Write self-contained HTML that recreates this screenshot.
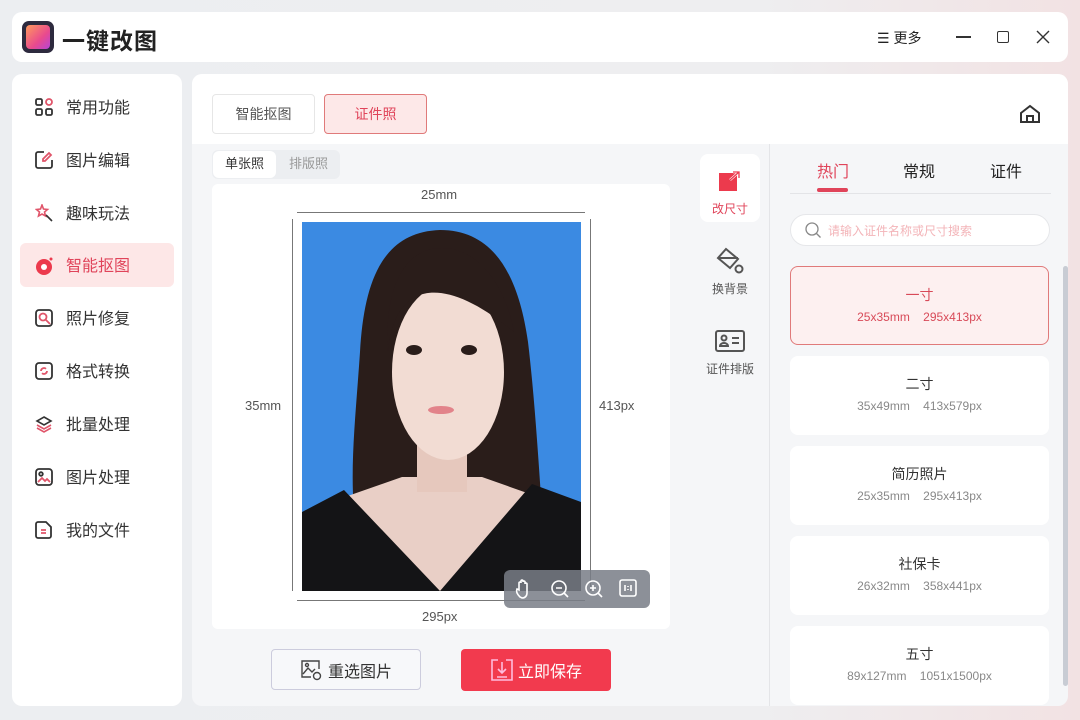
<!DOCTYPE html>
<html><head><meta charset="utf-8"><style>
*{margin:0;padding:0;box-sizing:border-box}
body{width:1080px;height:720px;overflow:hidden;font-family:"Liberation Sans","Noto Sans CJK SC",sans-serif;background:linear-gradient(90deg,#eceef1 0%,#eeeef0 70%,#f2e2e3 100%);position:relative;color:#333}
.abs{position:absolute}
.panel{position:absolute;background:#fff;border-radius:10px}
.nav{position:absolute;left:8px;width:154px;height:44px;border-radius:6px;font-size:16px;color:#333;display:flex;align-items:center}
.nav svg{position:absolute;left:15px;top:13px}
.nav span{position:absolute;left:46px;top:9px}
.card{position:absolute;left:790px;width:259px;height:79px;background:#fff;border-radius:8px;text-align:center}
.card .t{position:absolute;top:18px;width:100%;font-size:14px;color:#333}
.card .s{position:absolute;top:43px;width:100%;font-size:12px;color:#888;word-spacing:10px}
</style></head><body>
<!-- title bar -->
<div class="panel" style="left:12px;top:12px;width:1056px;height:50px"></div>
<div class="abs" style="left:22px;top:21px;width:32px;height:32px;border-radius:7px;background:#2d2a3e"></div>
<div class="abs" style="left:26px;top:25px;width:24px;height:24px;border-radius:4px;background:linear-gradient(135deg,#ff9a5c,#e94a8e 60%,#b545d6)"></div>
<div class="abs" style="left:62px;top:22px;font-size:23px;font-weight:bold;color:#222;letter-spacing:1px">一键改图</div>
<div class="abs" style="left:877px;top:28px;font-size:14px;color:#222">☰ 更多</div>
<div class="abs" style="left:956px;top:36px;width:15px;height:1.5px;background:#333"></div>
<div class="abs" style="left:997px;top:31px;width:12px;height:12px;border:1.5px solid #333;border-radius:2px"></div>
<svg class="abs" style="left:1036px;top:30px" width="14" height="14"><path d="M1 1L13 13M13 1L1 13" stroke="#333" stroke-width="1.4"/></svg>

<!-- sidebar -->
<div class="panel" style="left:12px;top:74px;width:170px;height:632px">
 <div class="nav" style="top:11px"><svg width="18" height="18" fill="none" stroke="#333" stroke-width="1.8"><rect x="1" y="1" width="6" height="6" rx="1.5"/><circle cx="14" cy="4" r="3" stroke="#e0556a"/><rect x="1" y="11" width="6" height="6" rx="1.5"/><rect x="11" y="11" width="6" height="6" rx="1.5"/></svg><span>常用功能</span></div>
 <div class="nav" style="top:64px"><svg width="18" height="18" fill="none" stroke="#333" stroke-width="1.8"><path d="M9 1H3a2 2 0 0 0-2 2v12a2 2 0 0 0 2 2h12a2 2 0 0 0 2-2V9"/><path d="M14 2l2 2-6 6H8V8z" stroke="#e0556a"/></svg><span>图片编辑</span></div>
 <div class="nav" style="top:117px"><svg width="18" height="18" fill="none" stroke="#e0556a" stroke-width="1.6"><path d="M7 1l1.5 4 4 .5-3 2.5 1 4-3.5-2-3.5 2 1-4-3-2.5 4-.5z"/><path d="M11 11l6 6" stroke="#333"/></svg><span>趣味玩法</span></div>
 <div class="nav" style="top:169px;background:#fde7e7;color:#e0445a"><svg width="20" height="20"><circle cx="9" cy="11" r="8" fill="#ec3a4d"/><circle cx="9" cy="11" r="3" fill="#fff"/><circle cx="16" cy="3" r="1.5" fill="#ec3a4d"/></svg><span>智能抠图</span></div>
 <div class="nav" style="top:222px"><svg width="18" height="18" fill="none" stroke="#333" stroke-width="1.8"><rect x="1" y="1" width="16" height="16" rx="3"/><circle cx="8" cy="8" r="3.5" stroke="#e0556a"/><path d="M10 10l5 5" stroke="#e0556a"/></svg><span>照片修复</span></div>
 <div class="nav" style="top:275px"><svg width="18" height="18" fill="none" stroke="#333" stroke-width="1.8"><rect x="1" y="1" width="16" height="16" rx="3"/><path d="M6 9a3 3 0 0 1 5-2.2M12 9a3 3 0 0 1-5 2.2" stroke="#e0556a"/></svg><span>格式转换</span></div>
 <div class="nav" style="top:328px"><svg width="18" height="18" fill="none" stroke="#333" stroke-width="1.6"><path d="M9 2l7 4-7 4-7-4z"/><path d="M2 10l7 4 7-4M2 13l7 4 7-4" stroke="#e0556a"/></svg><span>批量处理</span></div>
 <div class="nav" style="top:381px"><svg width="18" height="18" fill="none" stroke="#333" stroke-width="1.8"><rect x="1" y="1" width="16" height="16" rx="3"/><circle cx="6" cy="6" r="1.8"/><path d="M3 14l4-4 3 3 2-2 3 3" stroke="#e0556a"/></svg><span>图片处理</span></div>
 <div class="nav" style="top:434px"><svg width="18" height="18" fill="none" stroke="#333" stroke-width="1.8"><path d="M3 1h8l5 5v9a2 2 0 0 1-2 2H3a2 2 0 0 1-2-2V3a2 2 0 0 1 2-2z"/><path d="M6 9h5M6 12h5" stroke="#e0556a"/></svg><span>我的文件</span></div>
</div>

<!-- main -->
<div class="panel" style="left:192px;top:74px;width:876px;height:632px;background:#f5f6f8;overflow:hidden">
 <div class="abs" style="left:0;top:0;width:876px;height:70px;background:#fff"></div>
</div>
<div class="abs" style="left:212px;top:94px;width:103px;height:40px;border:1px solid #e6e6e6;border-radius:4px;font-size:14px;color:#555;text-align:center;line-height:38px;background:#fff">智能抠图</div>
<div class="abs" style="left:324px;top:94px;width:103px;height:40px;border:1px solid #e07a7a;border-radius:4px;font-size:14px;color:#e0445a;text-align:center;line-height:38px;background:#fde8e8">证件照</div>
<svg class="abs" style="left:1019px;top:104px" width="22" height="20" fill="none" stroke="#333" stroke-width="2"><path d="M2 9L11 2l9 7v9H2z"/><path d="M8 18v-6h6v6"/></svg>

<div class="abs" style="left:212px;top:150px;width:128px;height:29px;background:#eceef1;border-radius:6px"></div>
<div class="abs" style="left:213px;top:151px;width:63px;height:27px;background:#fff;border-radius:6px;font-size:13px;color:#333;text-align:center;line-height:25px">单张照</div>
<div class="abs" style="left:277px;top:151px;width:63px;height:27px;font-size:13px;color:#999;text-align:center;line-height:25px">排版照</div>

<div class="abs" style="left:212px;top:184px;width:458px;height:445px;background:#fff;border-radius:6px"></div>
<div class="abs" style="left:421px;top:187px;font-size:13px;color:#555">25mm</div>
<div class="abs" style="left:297px;top:212px;width:288px;height:1px;background:#777"></div>
<div class="abs" style="left:292px;top:219px;width:1px;height:372px;background:#777"></div>
<div class="abs" style="left:590px;top:219px;width:1px;height:372px;background:#777"></div>
<div class="abs" style="left:297px;top:600px;width:288px;height:1px;background:#777"></div>
<div class="abs" style="left:245px;top:398px;font-size:13px;color:#555">35mm</div>
<div class="abs" style="left:599px;top:398px;font-size:13px;color:#555">413px</div>
<div class="abs" style="left:422px;top:609px;font-size:13px;color:#555">295px</div>

<svg class="abs" style="left:302px;top:222px" width="279" height="369" viewBox="0 0 279 369">
 <rect width="279" height="369" fill="#3b8ae2"/>
 <path d="M138 8C80 10 62 60 58 130C54 190 48 240 52 290L240 290C236 230 232 170 226 120C216 50 190 8 138 8Z" fill="#2a1d1a"/>
 <path d="M100 255L0 290V369H279V290L180 255Z" fill="#e9cfc6"/>
 <rect x="115" y="200" width="50" height="70" fill="#e6c8bd"/>
 <ellipse cx="146" cy="150" rx="56" ry="88" fill="#f2dcd3"/>
 <path d="M86 130C92 60 140 50 212 110C205 70 180 26 140 26C100 26 82 70 86 130Z" fill="#2a1d1a"/>
 <ellipse cx="112" cy="128" rx="8" ry="5" fill="#2a1d1a"/><ellipse cx="167" cy="128" rx="8" ry="5" fill="#2a1d1a"/>
 <ellipse cx="139" cy="188" rx="13" ry="4" fill="#e2838a"/>
 <path d="M0 290L42 268L138 369L230 262L279 280V369H0Z" fill="#141416"/>
</svg>

<div class="abs" style="left:504px;top:570px;width:146px;height:38px;background:rgba(120,124,134,.85);border-radius:6px"></div>
<svg class="abs" style="left:514px;top:577px" width="130" height="24" fill="none" stroke="#fff" stroke-width="1.6">
 <path d="M6 20c-3-3-4-6-3-8l2 1V6a1 1 0 0 1 2 0V4a1 1 0 0 1 2 0v1a1 1 0 0 1 2 0v2a1 1 0 0 1 2 0v9c0 3-2 5-5 5z"/>
 <circle cx="45" cy="11" r="7"/><path d="M42 11h6M50 16l4 4"/>
 <circle cx="79" cy="11" r="7"/><path d="M76 11h6M79 8v6M84 16l4 4"/>
 <rect x="106" y="3" width="16" height="16" rx="2"/><path d="M111 8v6M117 8v6M114 9v1M114 12v1"/>
</svg>

<div class="abs" style="left:271px;top:649px;width:150px;height:41px;border:1px solid #ccd;border-radius:4px;background:#f7f8fa"></div>
<svg class="abs" style="left:300px;top:659px" width="22" height="22" fill="none" stroke="#444" stroke-width="1.4"><path d="M19 10V2H2v16h9"/><path d="M3 15l5-6 4 4 3-3"/><circle cx="7" cy="6" r="1.5"/><circle cx="17" cy="17" r="3.5"/></svg>
<div class="abs" style="left:328px;top:658px;font-size:16px;color:#333">重选图片</div>
<div class="abs" style="left:461px;top:649px;width:150px;height:42px;background:#f23a4e;border-radius:4px"></div>
<svg class="abs" style="left:490px;top:658px" width="24" height="24" fill="none" stroke="#fbd" stroke-width="1.6"><path d="M8 2H2v20h20V2h-6"/><path d="M12 4v11M8 11l4 4 4-4M7 19h10"/></svg>
<div class="abs" style="left:518px;top:658px;font-size:16px;color:#fff">立即保存</div>

<!-- tools column -->
<div class="abs" style="left:769px;top:144px;width:1px;height:562px;background:#e4e5e8"></div>
<div class="abs" style="left:700px;top:154px;width:60px;height:68px;background:#fff;border-radius:8px"></div>
<svg class="abs" style="left:718px;top:170px" width="24" height="22"><rect x="1" y="3" width="18" height="18" fill="#ec3a4d"/><path d="M12 10l9-8M15 2h6v6" stroke="#fff" stroke-width="2.5" fill="none"/><path d="M12 10l9-8M15 2h6v6" stroke="#ec3a4d" stroke-width="1.3" fill="none"/></svg>
<div class="abs" style="left:700px;top:200px;width:60px;text-align:center;font-size:12px;color:#e0445a">改尺寸</div>
<svg class="abs" style="left:714px;top:247px" width="32" height="28" fill="none" stroke="#555" stroke-width="2"><path d="M12 2l12 10-8 9-12-10z"/><path d="M4 11h20"/><circle cx="25" cy="22" r="3.5"/></svg>
<div class="abs" style="left:700px;top:280px;width:60px;text-align:center;font-size:12px;color:#555">换背景</div>
<svg class="abs" style="left:715px;top:330px" width="30" height="22" fill="none" stroke="#555" stroke-width="2"><rect x="1" y="1" width="28" height="20" rx="2"/><circle cx="9" cy="8" r="2.5"/><path d="M5 16a4 3 0 0 1 8 0zM17 8h7M17 13h7"/></svg>
<div class="abs" style="left:700px;top:360px;width:60px;text-align:center;font-size:12px;color:#555">证件排版</div>

<!-- right list -->
<div class="abs" style="left:817px;top:158px;font-size:16px;color:#e0445a">热门</div>
<div class="abs" style="left:817px;top:188px;width:31px;height:4px;background:#e0445a;border-radius:2px"></div>
<div class="abs" style="left:903px;top:158px;font-size:16px;color:#222">常规</div>
<div class="abs" style="left:990px;top:158px;font-size:16px;color:#222">证件</div>
<div class="abs" style="left:790px;top:193px;width:261px;height:1px;background:#e3e4e7"></div>
<div class="abs" style="left:790px;top:214px;width:260px;height:32px;background:#fff;border:1px solid #e6e7ea;border-radius:16px"></div>
<svg class="abs" style="left:804px;top:221px" width="18" height="18" fill="none" stroke="#888" stroke-width="1.3"><circle cx="8" cy="8" r="6"/><path d="M12.5 12.5l4 4"/></svg>
<div class="abs" style="left:828px;top:222px;font-size:12px;color:#f3b4b8">请输入证件名称或尺寸搜索</div>
<div class="card" style="top:266px;background:#fdf0f0;border:1px solid #e07a7a"><div class="t" style="color:#d84a58">一寸</div><div class="s" style="color:#d84a58">25x35mm 295x413px</div></div>
<div class="card" style="top:356px"><div class="t">二寸</div><div class="s">35x49mm 413x579px</div></div>
<div class="card" style="top:446px"><div class="t">简历照片</div><div class="s">25x35mm 295x413px</div></div>
<div class="card" style="top:536px"><div class="t">社保卡</div><div class="s">26x32mm 358x441px</div></div>
<div class="card" style="top:626px"><div class="t">五寸</div><div class="s">89x127mm 1051x1500px</div></div>
<div class="abs" style="left:1063px;top:266px;width:5px;height:420px;background:#c8ccd4;border-radius:3px"></div>
</body></html>
